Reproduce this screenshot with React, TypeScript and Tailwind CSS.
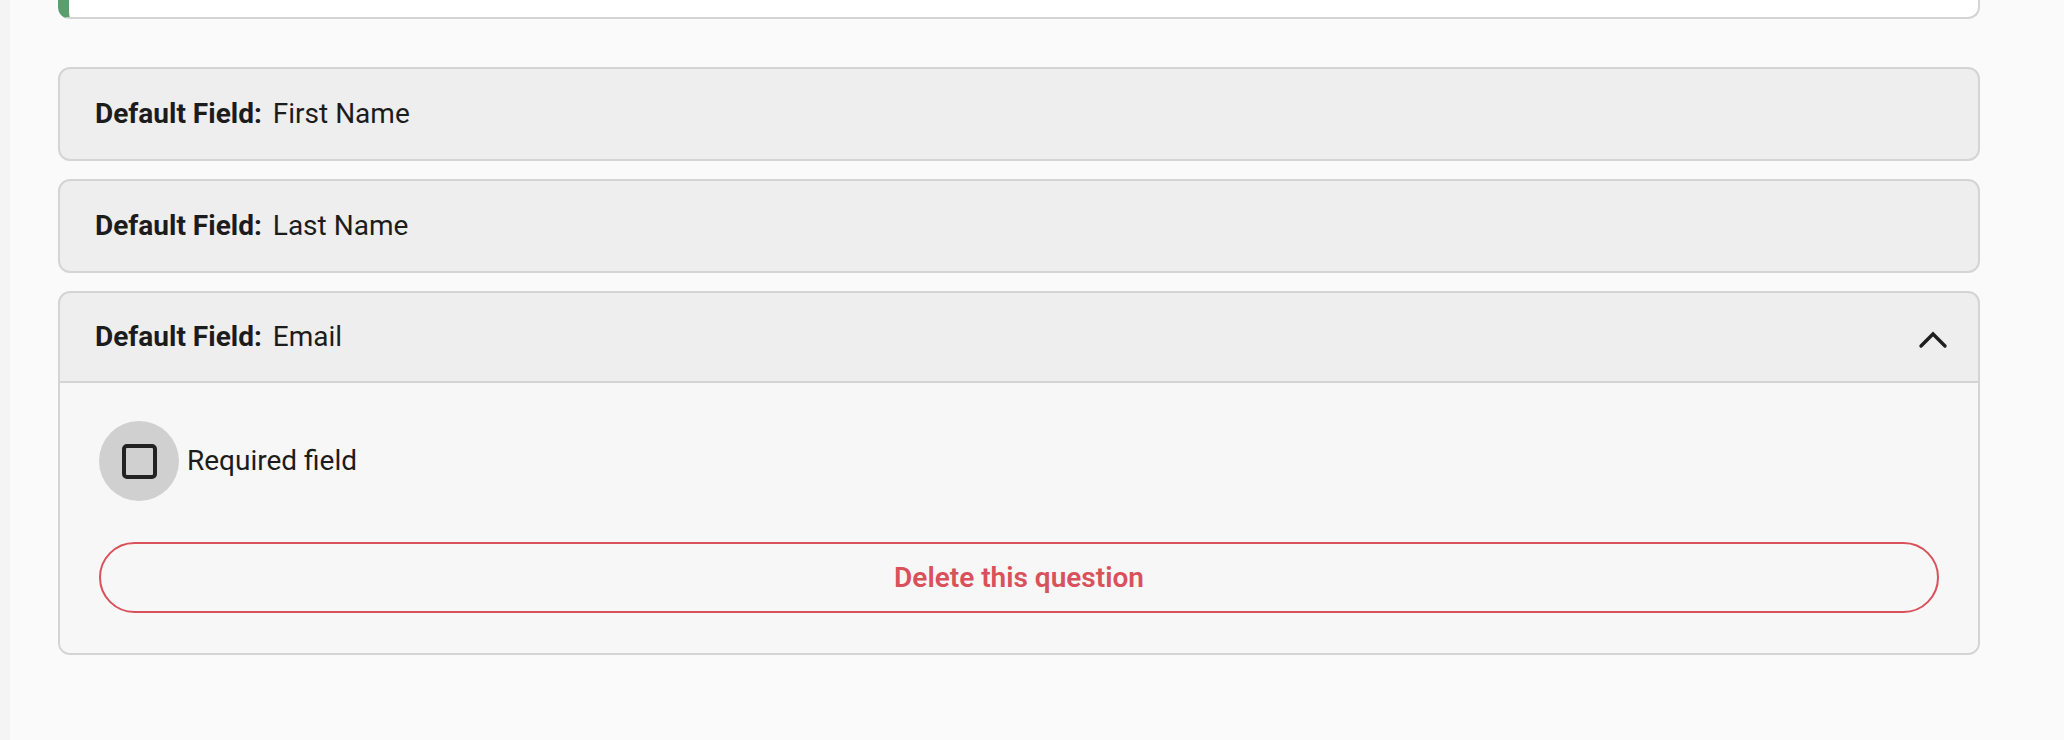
import { ReactNode } from 'react';

const font = { fontFamily: 'Roboto, "Noto Sans", Arial, sans-serif' };

type FieldCardProps = {
  label: string;
  open?: boolean;
  children?: ReactNode;
};

function FieldCard({ label, open, children }: FieldCardProps) {
  return (
    <div className="rounded-[12px] border-2 border-[#d4d4d4] bg-[#eeeeee] overflow-hidden">
      <div className={`flex items-center justify-between h-[90px] pl-[35px] pr-[30px] ${open ? 'border-b-2 border-[#d4d4d4]' : ''}`}>
        <div className="flex items-center gap-[11px] text-[28px] text-[#1c1c1c] leading-none">
          <span className="font-bold">Default Field:</span>
          <span>{label}</span>
        </div>
        {open && (
          <svg width="30" height="20" viewBox="0 0 30 20" fill="none" className="mt-[4px]">
            <path d="M3 17 L15 5 L27 17" stroke="#1f1f1f" strokeWidth="3.4" strokeLinecap="round" strokeLinejoin="miter" />
          </svg>
        )}
      </div>
      {open && <div className="bg-[#f7f7f7]">{children}</div>}
    </div>
  );
}

export default function App() {
  return (
    <div className="flex w-full h-[740px] bg-[#fafafa] overflow-hidden" style={font}>
      <div className="w-[10px] bg-[#f4f4f4]" />
      <div className="flex-1 pl-[48px] pr-[84px]">
        <div className="h-[19px] bg-white rounded-b-[12px] border-2 border-t-0 border-[#d4d4d4] border-l-[11px] border-l-[#5b9e6e]" />
        <div className="flex flex-col gap-[18px] mt-[48px]">
          <FieldCard label="First Name" />
          <FieldCard label="Last Name" />
          <FieldCard label="Email" open>
            <div className="px-[39px] pt-[38px] pb-[40px] flex flex-col gap-[41px]">
              <label className="flex items-center gap-[8px] text-[28px] text-[#1c1c1c]">
                <span className="w-[80px] h-[80px] rounded-full bg-[#d0d0d0] flex items-center justify-center">
                  <span className="w-[35px] h-[35px] rounded-[5px] border-[4px] border-[#222222]" />
                </span>
                <span>Required field</span>
              </label>
              <button className="h-[71px] w-full rounded-full border-2 border-[#d9515a] text-[#d9515a] text-[28px] font-semibold bg-transparent">
                Delete this question
              </button>
            </div>
          </FieldCard>
        </div>
      </div>
    </div>
  );
}
